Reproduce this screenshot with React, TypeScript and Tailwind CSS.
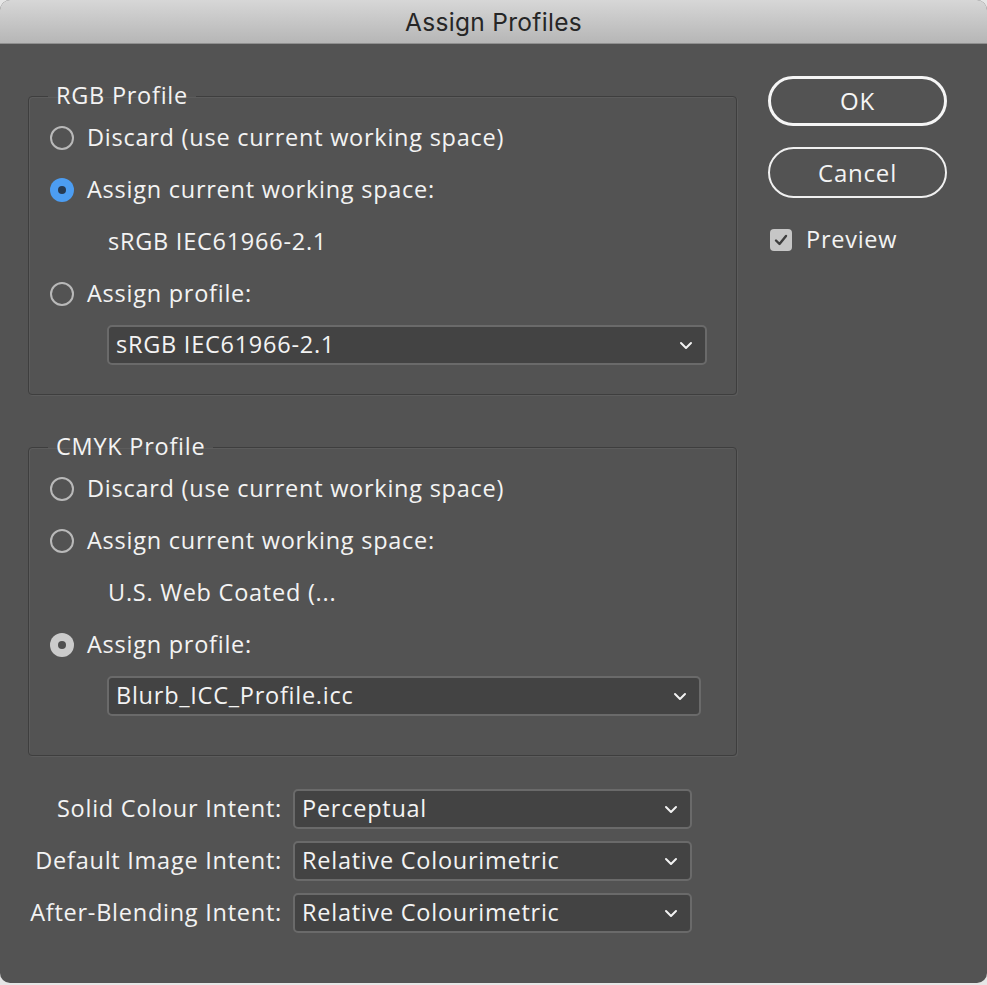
import React from "react";

const FONT = { fontFamily: '"Open Sans", "Noto Sans", sans-serif' };

function Radio({ state }: { state: "off" | "blue" | "gray" }) {
  if (state === "off") {
    return <span className="w-[24px] h-[24px] rounded-full border-2 border-[#b9b9b9] shrink-0" />;
  }
  return (
    <span
      className={
        "w-[24px] h-[24px] rounded-full shrink-0 flex items-center justify-center " +
        (state === "blue" ? "bg-[#4c9df2]" : "bg-[#cbcbcb]")
      }
    >
      <span className={"w-[8px] h-[8px] rounded-full " + (state === "blue" ? "bg-[#263a52]" : "bg-[#4f4f4f]")} />
    </span>
  );
}

function Chevron() {
  return (
    <svg width="14" height="9" viewBox="0 0 14 9" className="shrink-0">
      <path d="M2 2 L7 7 L12 2" fill="none" stroke="#f2f2f2" strokeWidth="2" strokeLinecap="round" strokeLinejoin="round" />
    </svg>
  );
}

const TXT = "text-[23.5px] tracking-[0.75px] text-[#f3f3f3] leading-none whitespace-nowrap";

function Select({ value, width }: { value: string; width: string }) {
  return (
    <div
      className={
        "h-[40px] rounded-[5px] border-2 border-[#6a6a6a] bg-[#434343] flex items-center justify-between pl-[7px] pr-[12px] " +
        width
      }
    >
      <span className={TXT}>{value}</span>
      <Chevron />
    </div>
  );
}

function RadioRow({ state, label }: { state: "off" | "blue" | "gray"; label: string }) {
  return (
    <div className="h-[52px] flex items-center gap-[13px] pl-[21px]">
      <Radio state={state} />
      <span className={TXT}>{label}</span>
    </div>
  );
}

function Group({
  title,
  rows,
  sub,
  selectValue,
  selectWidth,
  pb,
}: {
  title: string;
  rows: { state: "off" | "blue" | "gray"; label: string }[];
  sub: string;
  selectValue: string;
  selectWidth: string;
  pb: string;
}) {
  return (
    <fieldset
      className={
        "border border-[#3e3e3e] rounded-[4px] shadow-[inset_1px_1px_0_#5c5c5c,1px_1px_0_#5c5c5c] pt-[2px] " + pb
      }
    >
      <legend className="ml-[19px] px-[8px] h-[28px] flex items-center">
        <span className={TXT}>{title}</span>
      </legend>
      <RadioRow state={rows[0].state} label={rows[0].label} />
      <RadioRow state={rows[1].state} label={rows[1].label} />
      <div className="h-[52px] flex items-center pl-[79px]">
        <span className={TXT}>{sub}</span>
      </div>
      <RadioRow state={rows[2].state} label={rows[2].label} />
      <div className="pl-[78px] pt-[5px]">
        <Select value={selectValue} width={selectWidth} />
      </div>
    </fieldset>
  );
}

function IntentRow({ label, value }: { label: string; value: string }) {
  return (
    <div className="flex items-center gap-[11px]">
      <span className={"w-[254px] text-right " + TXT}>{label}</span>
      <Select value={value} width="w-[399px]" />
    </div>
  );
}

export default function App() {
  return (
    <div className="w-[987px] h-[985px] bg-[#e6e6e6]" style={FONT}>
      <div className="w-[987px] h-[983px] rounded-[10px] overflow-hidden bg-[#535353] flex flex-col">
        <div className="h-[44px] shrink-0 bg-gradient-to-b from-[#d7d7d7] to-[#b6b6b6] border-b border-[#8f8f8f] flex items-center justify-center">
          <span
            className="text-[24.5px] text-[#262626] tracking-[0.3px] mt-[2px]"
            style={{ fontFamily: '"Inter", "Noto Sans", sans-serif' }}
          >
            Assign Profiles
          </span>
        </div>
        <div className="flex pl-[28px]">
          <div className="w-[709px] pt-[38px] flex flex-col">
            <Group
              title="RGB Profile"
              rows={[
                { state: "off", label: "Discard (use current working space)" },
                { state: "blue", label: "Assign current working space:" },
                { state: "off", label: "Assign profile:" },
              ]}
              sub="sRGB IEC61966-2.1"
              selectValue="sRGB IEC61966-2.1"
              selectWidth="w-[600px]"
              pb="pb-[29px]"
            />
            <div className="h-[38px]" />
            <Group
              title="CMYK Profile"
              rows={[
                { state: "off", label: "Discard (use current working space)" },
                { state: "off", label: "Assign current working space:" },
                { state: "gray", label: "Assign profile:" },
              ]}
              sub="U.S. Web Coated (..."
              selectValue="Blurb_ICC_Profile.icc"
              selectWidth="w-[594px]"
              pb="pb-[39px]"
            />
            <div className="flex flex-col gap-[12px] mt-[33px]">
              <IntentRow label="Solid Colour Intent:" value="Perceptual" />
              <IntentRow label="Default Image Intent:" value="Relative Colourimetric" />
              <IntentRow label="After-Blending Intent:" value="Relative Colourimetric" />
            </div>
          </div>
          <div className="ml-[31px] pt-[32px] flex flex-col">
            <button className="w-[179px] h-[50px] rounded-full border-[3px] border-[#f5f5f5] text-[24px] tracking-[0.8px] text-[#f5f5f5] flex items-center justify-center">
              OK
            </button>
            <button className="mt-[21px] w-[179px] h-[51px] rounded-full border-2 border-[#f0f0f0] text-[24px] tracking-[0.8px] text-[#f3f3f3] flex items-center justify-center">
              Cancel
            </button>
            <div className="mt-[30px] ml-[2px] flex items-center gap-[14px]">
              <span className="w-[22px] h-[22px] rounded-[4px] bg-[#c6c6c6] flex items-center justify-center">
                <svg width="14" height="12" viewBox="0 0 14 12">
                  <path d="M2 6.5 L5.5 10 L12 2" fill="none" stroke="#3f3f3f" strokeWidth="2.4" strokeLinecap="round" strokeLinejoin="round" />
                </svg>
              </span>
              <span className={TXT}>Preview</span>
            </div>
          </div>
        </div>
      </div>
    </div>
  );
}
